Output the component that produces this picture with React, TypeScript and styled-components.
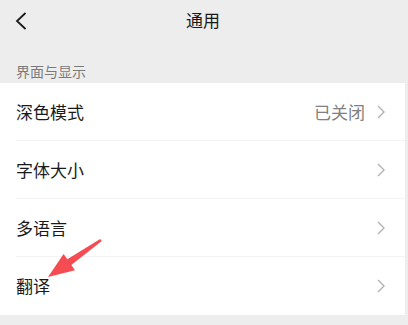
import React from "react";
import styled, { createGlobalStyle } from "styled-components";

const Global = createGlobalStyle`
  html, body { margin: 0; padding: 0; background: #ededed; }
  body { font-family: "Noto Sans CJK SC", "Noto Sans", sans-serif; -webkit-font-smoothing: antialiased; }
`;

const Page = styled.div`
  position: relative;
  width: 408px;
  height: 325px;
  background: #ededed;
  overflow: hidden;
`;

const NavBar = styled.div`
  height: 42px;
  display: grid;
  grid-template-columns: 48px 1fr 48px;
  align-items: center;
`;

const BackButton = styled.div`
  display: flex;
  align-items: center;
  padding-left: 15px;
  height: 100%;
`;

const Title = styled.div`
  text-align: center;
  font-size: 17px;
  line-height: 24px;
  color: #191919;
  margin-top: -2px;
  padding-right: 2px;
`;

const SectionHeader = styled.div`
  height: 41px;
  display: flex;
  align-items: flex-end;
  padding: 0 16px 2px;
  box-sizing: border-box;
  font-size: 14px;
  line-height: 20px;
  color: #7a7a7a;
`;

const List = styled.div`
  width: 405px;
  background: #ffffff;
`;

const Row = styled.div<{ $last?: boolean }>`
  height: 58px;
  margin-left: 16px;
  padding-right: 20px;
  box-sizing: border-box;
  display: flex;
  align-items: center;
  border-bottom: ${(p) => (p.$last ? "none" : "1px solid #f3f3f3")};
`;

const Label = styled.span`
  flex: 1;
  font-size: 17px;
  line-height: 24px;
  color: #1a1a1a;
`;

const Value = styled.span`
  font-size: 17px;
  line-height: 24px;
  color: #808080;
  margin-right: 12px;
`;

const Overlay = styled.svg`
  position: absolute;
  left: 0;
  top: 0;
  pointer-events: none;
`;

const Chevron = () => (
  <svg width="8" height="14" viewBox="0 0 8 14">
    <polyline points="1,1 7,7 1,13" fill="none" stroke="#b2b2b2" strokeWidth="1.4" />
  </svg>
);

const items = [
  { label: "深色模式", value: "已关闭" },
  { label: "字体大小" },
  { label: "多语言" },
  { label: "翻译" },
];

export default function App() {
  return (
    <>
      <Global />
      <Page>
        <NavBar>
          <BackButton>
            <svg width="12" height="18" viewBox="0 0 12 18">
              <polyline points="10.5,1 2,9 10.5,17" fill="none" stroke="#1a1a1a" strokeWidth="1.8" />
            </svg>
          </BackButton>
          <Title>通用</Title>
          <div />
        </NavBar>
        <SectionHeader>界面与显示</SectionHeader>
        <List>
          {items.map((it, i) => (
            <Row key={it.label} $last={i === items.length - 1}>
              <Label>{it.label}</Label>
              {it.value && <Value>{it.value}</Value>}
              <Chevron />
            </Row>
          ))}
        </List>
        <Overlay width="408" height="325" viewBox="0 0 408 325">
          <polygon
            points="101.8,241.1 100.2,238.9 67.3,259.2 63.6,253.9 48,277 75,270.3 71.3,265"
            fill="#f44c52"
          />
        </Overlay>
      </Page>
    </>
  );
}
